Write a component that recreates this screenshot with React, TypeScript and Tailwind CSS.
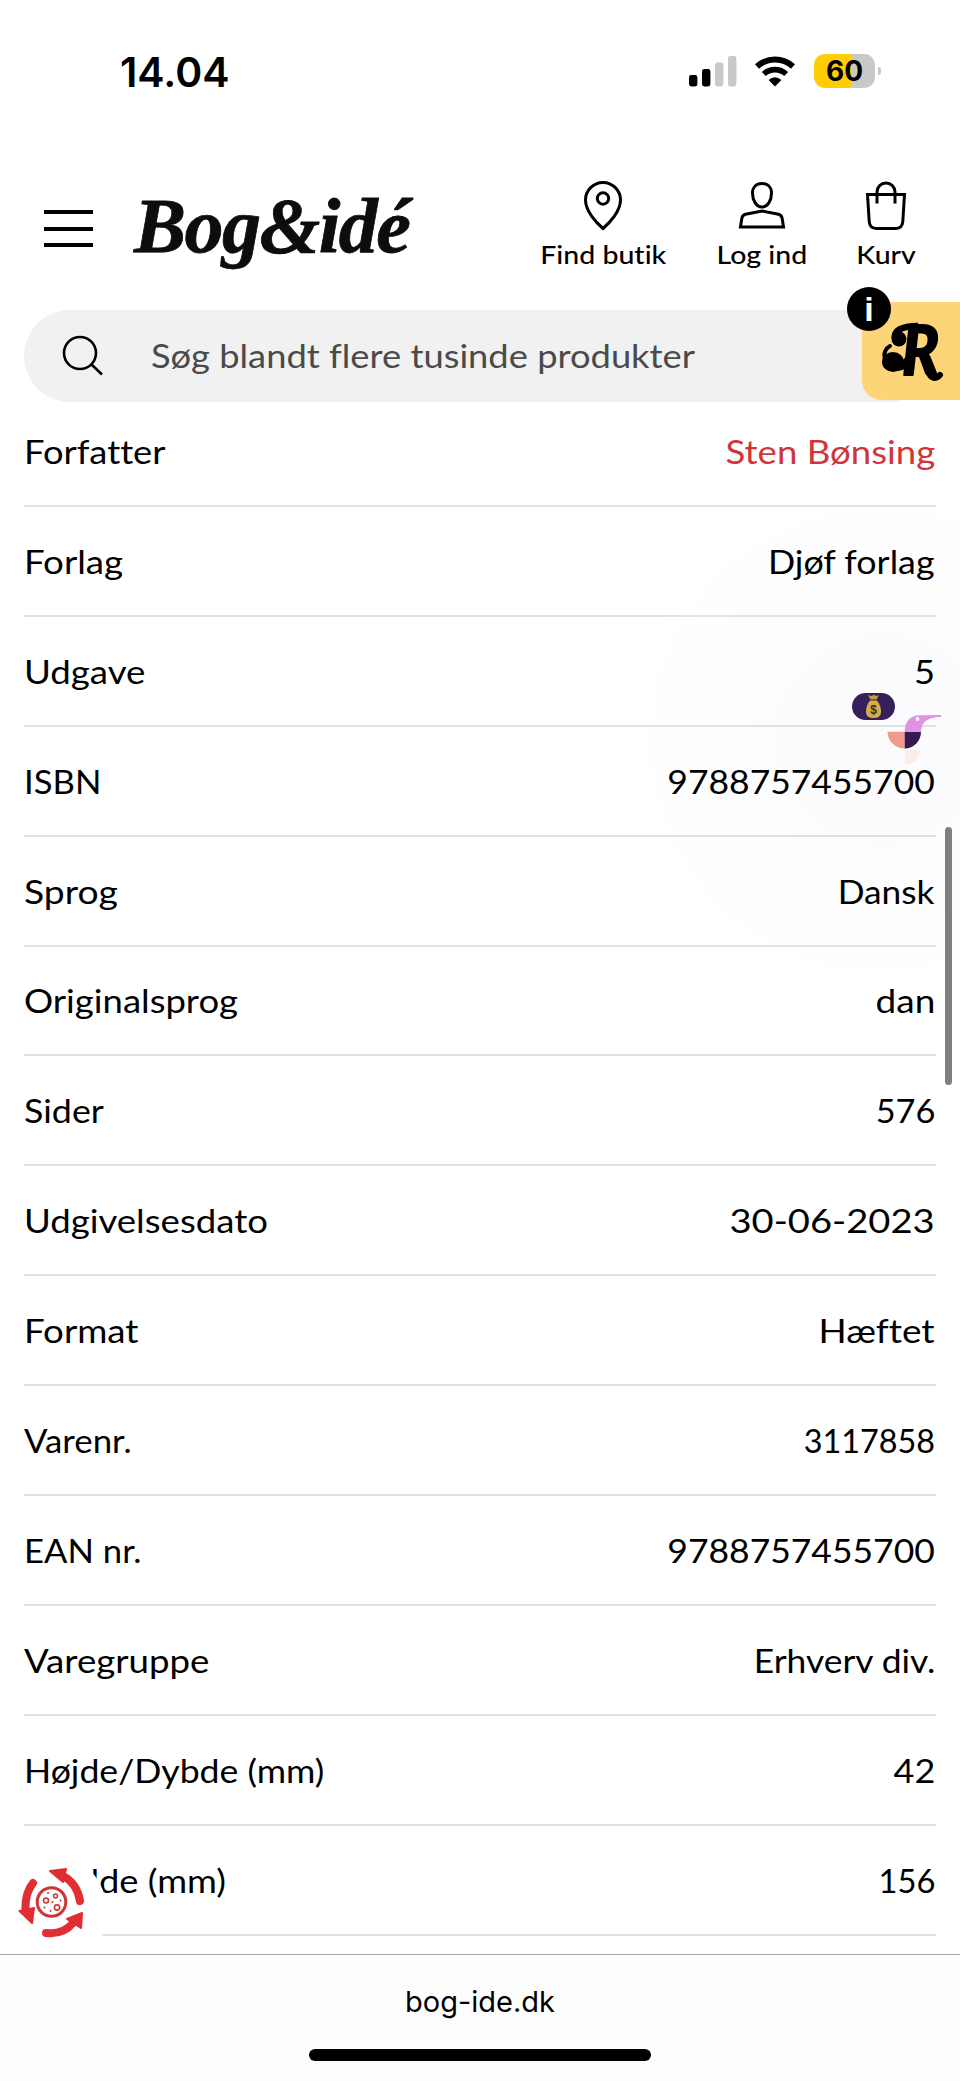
import type { ReactNode } from "react";

const rows = [
  { label: "Forfatter", value: "Sten Bønsing", ls: "scale-x-[1.1]", vs: "scale-x-[1.108]", link: true },
  { label: "Forlag", value: "Djøf forlag", ls: "scale-x-[1.11]", vs: "scale-x-[1.085]" },
  { label: "Udgave", value: "5", ls: "scale-x-[1.11]", vs: "scale-x-[1.1]" },
  { label: "ISBN", value: "9788757455700", ls: "scale-x-[1.05]", vs: "scale-x-[1.075]" },
  { label: "Sprog", value: "Dansk", ls: "scale-x-[1.13]", vs: "scale-x-[1.07]" },
  { label: "Originalsprog", value: "dan", ls: "scale-x-[1.105]", vs: "scale-x-[1.12]" },
  { label: "Sider", value: "576", ls: "scale-x-[1.085]", vs: "scale-x-[1.04]" },
  { label: "Udgivelsesdato", value: "30-06-2023", ls: "scale-x-[1.108]", vs: "scale-x-[1.155]" },
  { label: "Format", value: "Hæftet", ls: "scale-x-[1.11]", vs: "scale-x-[1.12]" },
  { label: "Varenr.", value: "3117858", ls: "scale-x-[1.055]", vs: "scale-x-[0.98]" },
  { label: "EAN nr.", value: "9788757455700", ls: "scale-x-[1.05]", vs: "scale-x-[1.075]" },
  { label: "Varegruppe", value: "Erhverv div.", ls: "scale-x-[1.11]", vs: "scale-x-[1.072]" },
  { label: "Højde/Dybde (mm)", value: "42", ls: "scale-x-[1.08]", vs: "scale-x-[1.09]" },
  { label: "Bredde (mm)", value: "156", ls: "scale-x-[1.1]", vs: "scale-x-[0.99]" },
];

function StatusBar() {
  return (
    <div className="flex h-[142px] items-start justify-between pl-[120px] pr-[79px] pt-[53px]">
      <span className="font-['Inter'] text-[41px] font-semibold leading-[38px] text-black">14.04</span>
      <div className="mt-px flex items-center">
        <svg width="48" height="32" viewBox="0 0 48 32">
          <rect x="0" y="20" width="8.4" height="11.5" rx="2.4" />
          <rect x="13" y="14" width="8.4" height="17.5" rx="2.4" />
          <rect x="26" y="7.5" width="8.4" height="24" rx="2.4" fill="#c9c9c9" />
          <rect x="39" y="1" width="8.4" height="30.5" rx="2.4" fill="#c9c9c9" />
        </svg>
        <svg className="ml-[17px]" width="42" height="32" viewBox="0 0 42 32">
          <path d="M3 11.5A26.5 26.5 0 0 1 39 11.5" fill="none" stroke="#000" strokeWidth="6" />
          <path d="M9.8 19A16.5 16.5 0 0 1 32.2 19" fill="none" stroke="#000" strokeWidth="5.6" />
          <path d="M14.6 25Q21 19.5 27.4 25L21 31.5Z" />
        </svg>
        <div className="ml-[18px] flex h-[34px] w-[61px] items-center justify-center rounded-[11px] bg-[linear-gradient(90deg,#ffcc05_60%,#c9c9c9_60%)]">
          <span className="font-['Inter'] text-[28px] font-bold leading-none">60</span>
        </div>
        <div className="ml-[3px] h-2 w-[3px] rounded-r-full bg-[#c9c9c9]" />
      </div>
    </div>
  );
}

function NavItem({ label, className, children }: { label: string; className: string; children: ReactNode }) {
  return (
    <div className={`flex flex-col items-center ${className}`}>
      {children}
      <span className="mt-[7px] scale-x-[1.14] whitespace-nowrap text-[25px] font-medium leading-8 [font-variant-ligatures:none]">{label}</span>
    </div>
  );
}

function Header() {
  return (
    <header className="flex h-[168px] items-start pl-[44px]">
      <div className="mt-[68px] flex w-[49px] flex-col gap-[12.5px]">
        <span className="h-1 bg-black" />
        <span className="h-1 bg-black" />
        <span className="h-1 bg-black" />
      </div>
      <span className="ml-[41px] mt-[39px] w-[280px] whitespace-nowrap font-['Liberation_Serif'] text-[78px] font-bold italic leading-[90px] tracking-[-1.5px] text-[#0d0d0d] [-webkit-text-stroke:0.8px_#0d0d0d]">
        Bog&amp;idé
      </span>
      <NavItem label="Find butik" className="ml-[126px] mt-[39px] w-[126px]">
        <svg width="40" height="50" viewBox="0 0 40 50" fill="none" stroke="#000" strokeWidth="3">
          <path d="M20 47.5C13 41.5 2.5 30 2.5 19A17.5 17.5 0 0 1 37.5 19C37.5 30 27 41.5 20 47.5Z" />
          <circle cx="20" cy="17.5" r="5.7" />
        </svg>
      </NavItem>
      <NavItem label="Log ind" className="ml-[49px] mt-[39px] w-[94px]">
        <svg width="48" height="50" viewBox="0 0 48 50" fill="none" stroke="#000" strokeWidth="3">
          <path d="M24 2.5C18 2.5 14.5 6.5 14.5 12C14.5 19 18 26 24 26S33.5 19 33.5 12C33.5 6.5 30 2.5 24 2.5Z" />
          <path d="M2.5 46H45.5L44.2 37.5Q43.7 34.2 40.5 33.3L24 30L7.5 33.3Q4.3 34.2 3.8 37.5Z" />
        </svg>
      </NavItem>
      <NavItem label="Kurv" className="ml-[48px] mt-[39px] w-[58px]">
        <svg width="42" height="50" viewBox="0 0 42 50" fill="none" stroke="#000" strokeWidth="3">
          <path d="M2.5 13.5H39.5L37.8 40.5Q37.3 47.5 30.5 47.5H11.5Q4.7 47.5 4.2 40.5Z" />
          <path d="M12 22.5V11A9 9 0 0 1 30 11V22.5" />
        </svg>
      </NavItem>
    </header>
  );
}

function SearchBar() {
  return (
    <div className="mx-6 flex h-[92px] items-center rounded-full bg-[#f1f1f1] pl-[38px]">
      <svg width="42" height="42" viewBox="0 0 42 42" fill="none" stroke="#000" strokeWidth="2.6">
        <circle cx="18" cy="18" r="16" />
        <path d="M29 29L40 39.5" />
      </svg>
      <span className="ml-[47px] origin-left scale-x-[1.1] whitespace-nowrap text-[33px] text-[#4a4a4a] [font-variant-ligatures:none]">
        Søg blandt flere tusinde produkter
      </span>
    </div>
  );
}

function RewardTab() {
  return (
    <div className="absolute right-0 top-[302px] h-[98px] w-[98px] rounded-l-[20px] bg-[#fdd477]">
      <svg className="absolute left-0 top-0" width="98" height="98" viewBox="0 0 98 98">
        <text
          x="40"
          y="73"
          fontFamily="Lato"
          fontWeight="900"
          fontStyle="italic"
          fontSize="69"
          textLength="37"
          lengthAdjust="spacingAndGlyphs"
          stroke="#000"
          strokeWidth="2"
          strokeLinejoin="round"
        >
          R
        </text>
        <circle cx="37" cy="37" r="7.5" />
        <path d="M32.500 36C32.500 28 41 24 56 24" fill="none" stroke="#000" strokeWidth="6.5" />
        <ellipse cx="31" cy="60" rx="11" ry="10" />
        <path d="M23 57C21 51 24 46 28 44" fill="none" stroke="#000" strokeWidth="4" strokeLinecap="round" />
        <path d="M32 65C43 66 48 58 51 46" fill="none" stroke="#000" strokeWidth="8" />
        <path d="M67 68C67 78 75 77 78 73" fill="none" stroke="#000" strokeWidth="6" strokeLinecap="round" />
      </svg>
      <div className="absolute -left-[15px] -top-[15px] flex size-[44px] items-center justify-center rounded-full bg-black font-['Liberation_Sans'] text-[34px] font-bold leading-none text-white">
        i
      </div>
    </div>
  );
}

function Companion() {
  return (
    <svg className="absolute left-[850px] top-[690px]" width="94" height="78" viewBox="0 0 94 78">
      <rect x="2" y="3" width="43" height="27" rx="13.5" fill="#37205a" />
      <path d="M18 5L21 6L24 5L27 6L29 5L26.5 9.5H20.5Z" fill="#c79a45" />
      <path d="M20.5 10H26.5Q31 15 31 22Q31 28 23.5 28T16 22Q16 15 20.5 10Z" fill="#d6ac4c" />
      <path d="M20 10H27" stroke="#7e5629" strokeWidth="1.5" />
      <text x="23.5" y="24" textAnchor="middle" fontFamily="Liberation Sans" fontWeight="700" fontSize="12" fill="#3a2b20">$</text>
      <path d="M37.5 41.7H54.7V58.5A17 17 0 0 1 37.5 41.7Z" fill="#f09a8c" />
      <path d="M54.7 41.7H71A16.5 16.5 0 0 1 54.7 58.5Z" fill="#35194f" />
      <path d="M54.7 41.7C54.7 31 61 25.5 69 25.2L91 25V26.8C80 27.5 72 29.5 71 41.7Z" fill="#de94e3" />
      <circle cx="67.5" cy="29" r="1.9" fill="#fff" />
      <path d="M55 60H70Q69 74 55 75Z" fill="#fbeae0" opacity=".8" />
    </svg>
  );
}

function CookieButton() {
  return (
    <div className="absolute left-[-13px] top-[1852px] size-[120px] rounded-full bg-white">
      <svg className="absolute left-[29px] top-[14px]" width="72" height="74" viewBox="0 0 72 74">
        <g fill="none" stroke="#e22d32" strokeWidth="8" strokeLinecap="round">
          <path d="M17 17Q9 27 9.5 43" />
          <path d="M30 67Q47 69 57 57" />
          <path d="M64 35Q61 17 47 10" />
        </g>
        <g fill="#e22d32" stroke="#e22d32" strokeWidth="2" strokeLinejoin="round">
          <path d="M3.5 45L18 42L16 57Z" />
          <path d="M51 53L66 47L65 62Z" />
          <path d="M34 5L50 3L47 16Z" />
        </g>
        <g fill="none" stroke="#cf3438">
          <circle cx="35.5" cy="36" r="14.3" strokeWidth="3" />
          <circle cx="30" cy="34.5" r="2.5" strokeWidth="1.6" />
          <circle cx="39.5" cy="30" r="2" strokeWidth="1.5" />
          <circle cx="41" cy="41.5" r="2.6" strokeWidth="1.6" />
        </g>
        <g fill="#cf3438">
          <circle cx="32" cy="27" r="1" />
          <circle cx="36.5" cy="36" r="1" />
          <circle cx="28.5" cy="41.5" r="1" />
          <circle cx="34.5" cy="45" r="1" />
          <circle cx="44.5" cy="34.5" r="1" />
        </g>
      </svg>
    </div>
  );
}

export default function App() {
  return (
    <div className="relative h-[2081px] w-[960px] overflow-hidden bg-white font-['Lato',sans-serif] text-black">
      <div className="absolute left-[620px] top-[480px] h-[520px] w-[520px] bg-[radial-gradient(circle,#fbfbfe_0%,#fdfdfe_45%,#ffffff_70%)]" />
      <div className="relative flex h-full flex-col">
        <StatusBar />
        <Header />
        <SearchBar />
        <dl className="mx-6 flex h-[1552px] flex-col">
          {rows.map((row, i) => (
            <div
              key={row.label}
              className={`flex shrink-0 items-end justify-between whitespace-nowrap border-b-[2px] border-[#e2e2e2] pb-[34px] pr-px text-[33px] leading-10 [font-variant-ligatures:none] ${i === 0 ? "h-[105px]" : "h-[109.9px]"}`}
            >
              <dt className={`origin-left ${row.ls}`}>{row.label}</dt>
              <dd className={`origin-right ${row.vs} ${row.link ? "text-[#d0353a]" : ""}`}>{row.value}</dd>
            </div>
          ))}
        </dl>
        <footer className="relative z-10 flex h-[127px] flex-col items-center border-t border-[#a6a6a6] bg-[#fdfdfd]">
          <span className="mt-[27px] font-['Inter'] text-[29px] leading-10">bog-ide.dk</span>
          <div className="mt-[27px] h-3 w-[342px] rounded-full bg-black" />
        </footer>
        <CookieButton />
      </div>
      <RewardTab />
      <Companion />
      <div className="absolute left-[945px] top-[827px] h-[258px] w-[7px] rounded-full bg-[#808080]" />
    </div>
  );
}
